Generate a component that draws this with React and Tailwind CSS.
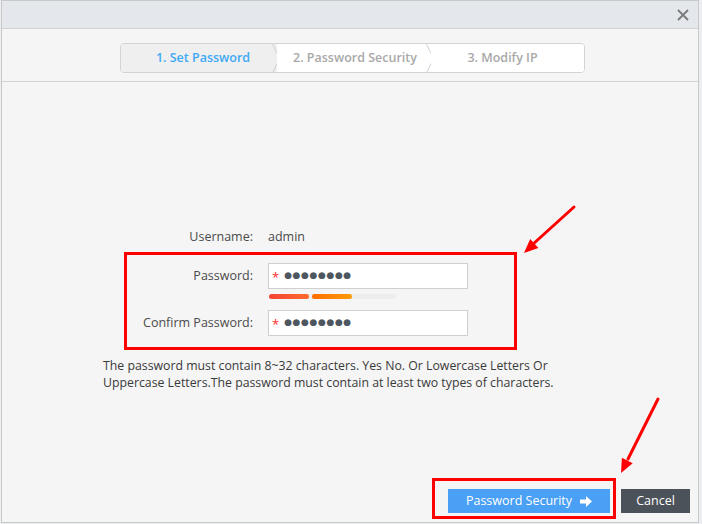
import React from "react";

const font = { fontFamily: '"Open Sans", "Noto Sans", sans-serif' };

// step chevron separator
const Chevron = () => (
  <svg className="absolute -right-[4px] top-0 h-[29px] w-[9px]" viewBox="0 0 9 29">
    <path d="M0.5 0 L7.5 14.5 L0.5 29" fill="none" stroke="#d0d0d0" strokeWidth="1" />
  </svg>
);

const Step = ({ label, active, last, className }) => (
  <div
    className={`relative flex h-full items-center justify-center text-[12.5px] font-semibold ${className} ${
      active ? "bg-[#efefef] text-[#3fa9f5]" : "bg-white text-[#a9a9a9]"
    }`}
  >
    {label}
    {!last && <Chevron />}
  </div>
);

const PasswordField = () => (
  <div className="flex h-[26px] w-[200px] items-center border border-[#cfcfcf] bg-white pl-[3px]">
    <span className="mt-[3px] text-[13px] text-[#ff2a2a]">*</span>
    <span className="ml-[5px] text-[9px] tracking-[0.6px] text-[#4e5660]" style={{ fontFamily: '"DejaVu Sans", sans-serif' }}>
      ●●●●●●●●
    </span>
  </div>
);

export default function App() {
  return (
    <div className="relative h-[524px] w-[702px] overflow-hidden bg-[#eceef1]" style={font}>
      <div className="ml-[1px] flex h-[523px] w-[698px] flex-col border border-[#c8c8c8] bg-[#f5f5f5]">
        {/* header */}
        <div className="flex h-[28px] shrink-0 items-center justify-end border-b border-[#d2d2d2] bg-[#e4e7ec] pr-[9px]">
          <svg width="12" height="12" viewBox="0 0 12 12">
            <path d="M1 1 L11 11 M11 1 L1 11" stroke="#7a7a7a" strokeWidth="1.8" />
          </svg>
        </div>

        {/* steps */}
        <div className="flex h-[53px] shrink-0 items-start border-b border-[#d2d2d2] pl-[118px] pt-[14px]">
          <div className="flex h-[30px] w-[465px] overflow-hidden rounded-[4px] border border-[#d3d3d3] bg-white">
            <Step label="1. Set Password" active className="w-[156px] pl-[8px]" />
            <Step label="2. Password Security" className="w-[154px] pl-[2px]" />
            <Step label="3. Modify IP" last className="flex-1 pr-[10px]" />
          </div>
        </div>

        {/* body */}
        <div className="flex flex-1 flex-col pl-[101px] pt-[145px] text-[12.5px] text-[#4a4a4a]">
          <div className="flex h-[20px] items-center">
            <div className="w-[150px] text-right">Username:</div>
            <div className="ml-[15px]">admin</div>
          </div>

          <div className="mt-[16px] flex items-center">
            <div className="w-[150px] text-right">Password:</div>
            <div className="ml-[15px]">
              <PasswordField />
            </div>
          </div>
          <div className="ml-[166px] mt-[5px] flex h-[5px] w-[127px] gap-[3px] rounded-full bg-[#ededed]">
            <div className="h-full w-[40px] rounded-full bg-gradient-to-r from-[#f44336] to-[#ff6a2b]" />
            <div className="h-full w-[40px] rounded-full bg-gradient-to-r from-[#ff6d00] to-[#ff9a0a]" />
          </div>

          <div className="mt-[11px] flex items-center">
            <div className="w-[150px] text-right">Confirm Password:</div>
            <div className="ml-[15px]">
              <PasswordField />
            </div>
          </div>

          <p className="mt-[21px] w-[470px] text-[12.3px] leading-[17px] text-[#3a3a3a]">
            The password must contain 8~32 characters. Yes No. Or Lowercase Letters Or Uppercase Letters.The
            password must contain at least two types of characters.
          </p>

          <div className="mt-auto flex justify-end gap-[11px] pb-[9px] pr-[8px]">
            <button className="flex h-[24px] w-[162px] items-center justify-center gap-[8px] bg-[#4aa0f5] text-[12.5px] text-white">
              Password Security
              <svg width="12" height="11" viewBox="0 0 12 11">
                <path d="M0 3.5 H6 V0 L12 5.5 L6 11 V7.5 H0 Z" fill="white" />
              </svg>
            </button>
            <button className="h-[24px] w-[69px] bg-[#4b5259] text-[12.5px] text-white">Cancel</button>
          </div>
        </div>
      </div>

      {/* annotations */}
      <div className="pointer-events-none absolute left-[124px] top-[252px] h-[98px] w-[393px] border-[3px] border-[#ff0000]" />
      <div className="pointer-events-none absolute left-[432px] top-[478px] h-[41px] w-[184px] border-[3px] border-[#ff0000]" />
      <svg className="pointer-events-none absolute left-0 top-0" width="702" height="524">
        <line x1="574" y1="207" x2="532" y2="245" stroke="#ff0000" strokeWidth="3" strokeLinecap="round" />
        <polygon points="524,253 538.4,247.9 530.2,239.1" fill="#ff0000" />
        <line x1="658" y1="399" x2="628" y2="459" stroke="#ff0000" strokeWidth="3" strokeLinecap="round" />
        <polygon points="621,473 632.7,463.2 621.9,457.8" fill="#ff0000" />
      </svg>
    </div>
  );
}
